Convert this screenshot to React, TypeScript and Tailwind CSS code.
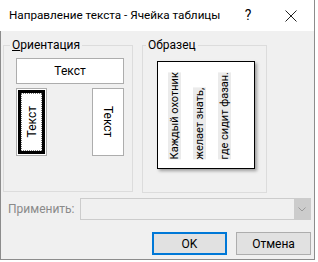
import React from "react";

const font = { fontFamily: 'Roboto, "Noto Sans", Arial, sans-serif' };

export default function App() {
  return (
    <div className="w-[318px] h-[262px] bg-white text-[12px] text-black whitespace-nowrap" style={font}>
      <div className="w-[315px] h-[260px] flex flex-col border-r border-b border-[#8c8c8c]">
        {/* title bar */}
        <div className="h-[31px] flex items-center bg-white pl-[9px]">
          <span className="text-[11.7px] leading-none">Направление текста - Ячейка таблицы</span>
          <span className="ml-auto w-[40px] text-center text-[14px]">?</span>
          <span className="w-[46px] flex justify-center">
            <svg width="12" height="12" viewBox="0 0 12 12">
              <path d="M0.5 0.5L11.5 11.5M11.5 0.5L0.5 11.5" stroke="#222" strokeWidth="1" />
            </svg>
          </span>
        </div>

        {/* body */}
        <div className="flex-1 bg-[#f0f0f0] border-l border-[#8c8c8c] flex flex-col pt-[6px]">
          <div className="flex pl-[2px] gap-[9px]">
            <fieldset className="w-[130px] h-[155px] border border-[#dcdcdc]">
              <legend className="ml-[6px] px-[2px] leading-[16px]">
                <span className="underline">О</span>риентация
              </legend>
              <div className="pl-[12px]">
                <div className="mt-[5px] h-[26px] w-[108px] bg-white border border-[#adadad] flex items-center justify-center">
                  Текст
                </div>
                <div className="mt-[4px] flex justify-between w-[108px]">
                  <div className="w-[31px] h-[68px] border border-[#adadad] bg-white p-[1px]">
                    <div className="w-full h-full border-[3px] border-black">
                      <div className="w-full h-full border border-dotted border-[#777] flex items-center justify-center">
                        <span className="[writing-mode:vertical-rl] rotate-180 leading-none">Текст</span>
                      </div>
                    </div>
                  </div>
                  <div className="w-[32px] h-[68px] border border-[#adadad] bg-white flex items-center justify-center">
                    <span className="[writing-mode:vertical-rl] leading-none">Текст</span>
                  </div>
                </div>
              </div>
            </fieldset>

            <fieldset className="w-[125px] h-[156px] border border-[#dcdcdc]">
              <legend className="ml-[3px] px-[2px] leading-[16px]">Образец</legend>
              <div className="pl-[14px]">
                <div className="mt-[8px] w-[98px] h-[108px] bg-white border border-black shadow-[2px_2px_3px_rgba(0,0,0,0.35)] flex items-end pl-[4px] pb-[9px]">
                  <div className="[writing-mode:vertical-rl] rotate-180 leading-[25px] text-[11px]">
                    <span className="bg-[#ebebeb]">Каждый охотник</span>
                    <br />
                    <span className="bg-[#ebebeb]">желает знать,</span>
                    <br />
                    <span className="bg-[#ebebeb]">где сидит фазан.</span>
                  </div>
                </div>
              </div>
            </fieldset>
          </div>

          <div className="mt-[5px] flex items-center pl-[7px]">
            <span className="w-[72px] text-[#8a8a8a]">Применить:</span>
            <div className="w-[231px] h-[22px] border border-[#cccccc] bg-[#f0f0f0] flex justify-end">
              <div className="w-[16px] h-full bg-[#cccccc] flex items-center justify-center">
                <svg width="8" height="5" viewBox="0 0 8 5">
                  <path d="M0.5 0.5L4 4L7.5 0.5" stroke="#9a9a9a" fill="none" strokeWidth="1" />
                </svg>
              </div>
            </div>
          </div>

          <div className="mt-[12px] flex justify-end gap-[9px] pr-[3px]">
            <div className="w-[75px] h-[23px] bg-[#e1e1e1] border-2 border-[#0078d7] flex items-center justify-center">
              OK
            </div>
            <div className="w-[75px] h-[23px] bg-[#e1e1e1] border border-[#adadad] flex items-center justify-center">
              Отмена
            </div>
          </div>
        </div>
      </div>
    </div>
  );
}
